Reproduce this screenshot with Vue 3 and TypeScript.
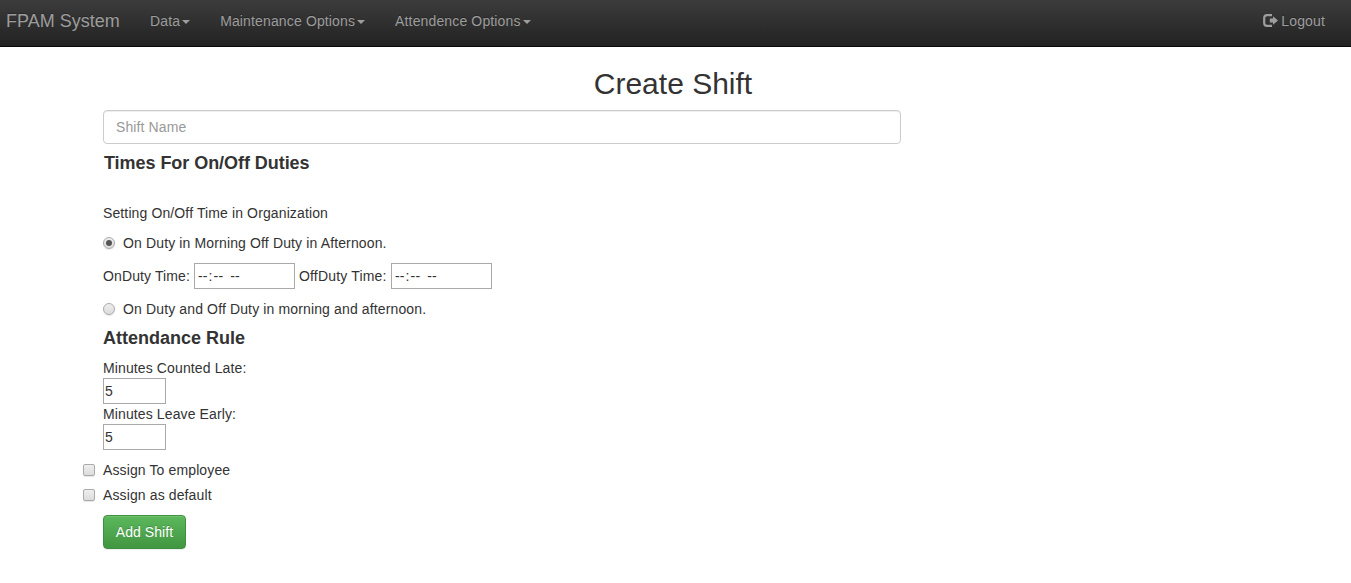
<script setup lang="ts">
import { ref } from 'vue'

const menus: string[] = ['Data', 'Maintenance Options', 'Attendence Options']
const shiftName = ref('')
const dutyMode = ref<'single' | 'split'>('single')
const rules = ref([
  { label: 'Minutes Counted Late:', value: '5' },
  { label: 'Minutes Leave Early:', value: '5' },
])
const assignments = ref([
  { label: 'Assign To employee', checked: false },
  { label: 'Assign as default', checked: false },
])
</script>

<template>
  <div class="page">
    <nav class="navbar">
      <a class="brand">FPAM System</a>
      <a v-for="menu in menus" :key="menu" class="nav-link">{{ menu }}<i class="caret"></i></a>
      <a class="nav-link logout">
        <svg class="logout-icon" width="15" height="13" viewBox="0 0 15 13">
          <path d="M9 1.1H4Q1.2 1.1 1.2 3.9V9.1Q1.2 11.9 4 11.9H9" fill="none" stroke="currentColor" stroke-width="2.2" />
          <path d="M6.8 4.6H10V2.2L15 6.5L10 10.8V8.4H6.8Z" fill="currentColor" />
        </svg>
        <span>Logout</span>
      </a>
    </nav>

    <form class="shift-form" @submit.prevent>
      <h2>Create Shift</h2>
      <input v-model="shiftName" class="name-input" type="text" placeholder="Shift Name" />
      <h4 class="times-title">Times For On/Off Duties</h4>

      <p class="intro">Setting On/Off Time in Organization</p>
      <label class="choice">
        <input v-model="dutyMode" type="radio" value="single" />
        <span class="duty">On Duty in Morning Off Duty in Afternoon.</span>
      </label>
      <div class="time-row">
        <span class="on-label">OnDuty Time:</span>
        <div class="time-field"><span>--</span><span>:</span><span>--</span><span class="meridiem">--</span></div>
        <span class="off-label">OffDuty Time:</span>
        <div class="time-field"><span>--</span><span>:</span><span>--</span><span class="meridiem">--</span></div>
      </div>
      <label class="choice">
        <input v-model="dutyMode" type="radio" value="split" />
        <span class="duty">On Duty and Off Duty in morning and afternoon.</span>
      </label>

      <h4 class="rule-title">Attendance Rule</h4>
      <label v-for="rule in rules" :key="rule.label" class="rule">
        <span>{{ rule.label }}</span>
        <input v-model="rule.value" type="text" />
      </label>

      <div class="assignments">
        <label v-for="item in assignments" :key="item.label" class="choice">
          <input v-model="item.checked" type="checkbox" />
          <span>{{ item.label }}</span>
        </label>
      </div>
      <button class="submit" type="submit">Add Shift</button>
    </form>
  </div>
</template>

<style>
body {
  margin: 0;
  background: #fff;
}
</style>

<style scoped>
* {
  box-sizing: border-box;
}
.page {
  height: 583px;
  overflow: hidden;
  font: 14px/20px "Liberation Sans", Arial, sans-serif;
  letter-spacing: 0.12px;
  color: #333;
}
.navbar {
  display: flex;
  height: 47px;
  padding: 11px 26px 0 6px;
  border-bottom: 1px solid #080808;
  background: linear-gradient(#3c3c3c, #222);
  color: #9d9d9d;
  text-shadow: 0 -1px 0 rgba(0, 0, 0, 0.25);
}
.brand {
  width: 114px;
  margin-right: 30px;
  font-size: 18px;
  letter-spacing: 0;
  white-space: nowrap;
}
.nav-link {
  display: flex;
  margin-right: 30px;
  letter-spacing: 0.14px;
  white-space: nowrap;
}
.caret {
  align-self: flex-start;
  margin: 9px 0 0 2px;
  border: 4px solid transparent;
  border-top-color: currentColor;
  border-bottom: 0;
}
.logout {
  margin: 0 0 0 auto;
}
.logout-icon {
  margin: 3px 3px 0 0;
}
.shift-form {
  width: 798px;
  margin-left: 103px;
  padding-top: 20px;
}
h2,
h4,
p {
  margin: 0;
}
h2 {
  width: 1140px;
  height: 43px;
  font-size: 30px;
  font-weight: 400;
  line-height: 33px;
  letter-spacing: 0;
  text-align: center;
}
h4 {
  font-size: 18px;
  line-height: 20px;
  letter-spacing: 0;
}
input,
button {
  font: inherit;
  letter-spacing: inherit;
  color: inherit;
}
.name-input {
  display: block;
  width: 100%;
  height: 34px;
  padding: 6px 12px;
  border: 1px solid #ccc;
  border-radius: 4px;
  outline: 0;
  box-shadow: inset 0 1px 1px rgba(0, 0, 0, 0.075);
}
.name-input::placeholder {
  color: #999;
  opacity: 1;
}
.times-title {
  margin: 9px 0 30px 1px;
  letter-spacing: -0.05px;
}
.choice {
  display: flex;
  align-items: center;
  height: 20px;
}
.choice input {
  display: grid;
  place-items: center;
  width: 12px;
  height: 12px;
  margin: 0 8px 0 0;
  appearance: none;
  border: 1px solid #aaa;
  border-radius: 50%;
  background: linear-gradient(#eee, #dcdcdc);
  box-shadow: 0 1px 1px rgba(0, 0, 0, 0.1);
}
.choice input:checked::before {
  content: "";
  width: 6px;
  height: 6px;
  border-radius: 50%;
  background: #555;
}
.choice input[type="checkbox"] {
  border-radius: 2px;
}
.duty {
  letter-spacing: 0.135px;
}
.intro {
  margin-bottom: 10px;
}
.time-row {
  display: flex;
  align-items: center;
  height: 26px;
  margin: 10px 0;
}
.on-label {
  width: 91px;
}
.off-label {
  width: 92px;
  margin-left: 4px;
  letter-spacing: 0.17px;
}
.time-field {
  display: flex;
  gap: 1px;
  width: 101px;
  height: 26px;
  padding: 2px 0 0 3px;
  border: 1px solid #a9a9a9;
}
.meridiem {
  margin-left: 6px;
}
.rule-title {
  margin: 9px 0 10px;
}
.rule {
  display: block;
}
.rule span {
  display: block;
}
.rule input {
  display: block;
  width: 63px;
  height: 26px;
  padding: 1px;
  border: 1px solid #a9a9a9;
  outline: 0;
}
.assignments {
  display: grid;
  gap: 5px;
  margin: 10px 0 10px -20px;
}
.submit {
  width: 83px;
  height: 34px;
  padding: 0;
  border: 1px solid #3e8f3e;
  border-radius: 4px;
  background: linear-gradient(#5cb85c, #419641);
  box-shadow: inset 0 1px 0 rgba(255, 255, 255, 0.15), 0 1px 1px rgba(0, 0, 0, 0.075);
  color: #fff;
  letter-spacing: 0.05px;
  text-shadow: 0 -1px 0 rgba(0, 0, 0, 0.2);
}
</style>
